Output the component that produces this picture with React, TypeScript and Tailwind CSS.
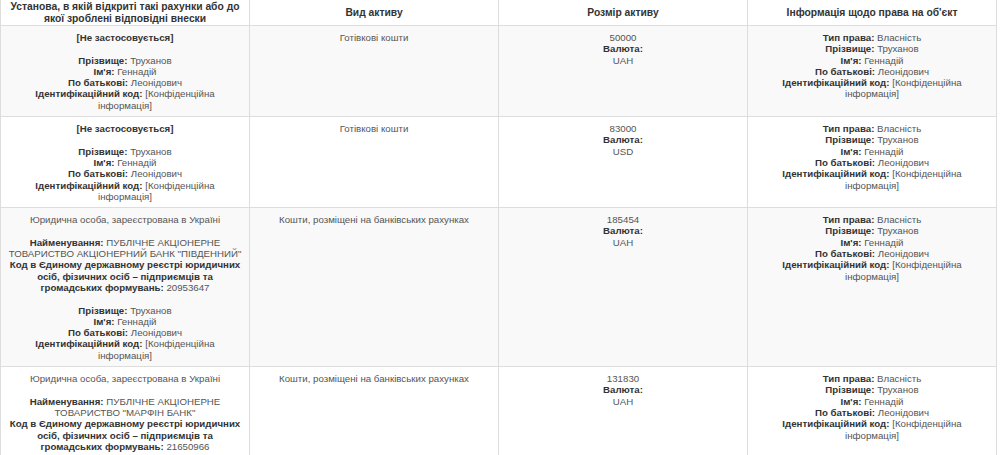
import React from "react";

const L = ({ children }: { children: React.ReactNode }) => (
  <b className="font-bold text-[#333]">{children}</b>
);

const Person = () => (
  <>
    <L>Прізвище:</L> Труханов
    <br />
    <L>Ім'я:</L> Геннадій
    <br />
    <L>По батькові:</L> Леонідович
    <br />
    <L>Ідентифікаційний код:</L> [Конфіденційна
    <br />
    інформація]
  </>
);

const Rights = () => (
  <>
    <L>Тип права:</L> Власність
    <br />
    <Person />
  </>
);

const Size = ({ amount, cur }: { amount: string; cur: string }) => (
  <>
    {amount}
    <br />
    <L>Валюта:</L>
    <br />
    {cur}
  </>
);

const Bank = ({ name2, code }: { name2: string; code: string }) => (
  <>
    Юридична особа, зареєстрована в Україні
    <br />
    <br />
    <L>Найменування:</L> ПУБЛІЧНЕ АКЦІОНЕРНЕ
    <br />
    {name2}
    <br />
    <L>Код в Єдиному державному реєстрі юридичних</L>
    <br />
    <L>осіб, фізичних осіб – підприємців та</L>
    <br />
    <L>громадських формувань:</L> {code}
    <br />
    <br />
    <Person />
  </>
);

const Cash = () => (
  <>
    <L>[Не застосовується]</L>
    <br />
    <br />
    <Person />
  </>
);

const td =
  "border border-[#ddd] px-[6px] pt-[6px] pb-[5px] align-top text-center whitespace-nowrap";
const th =
  "w-1/4 border-x border-b border-[#ddd] px-[6px] py-[1px] align-middle text-center font-bold text-[#333] text-[10.3px] leading-[11.5px] whitespace-nowrap";

export default function App() {
  const rows = [
    { a: <Cash />, b: "Готівкові кошти", c: <Size amount="50000" cur="UAH" />, d: <Rights /> },
    { a: <Cash />, b: "Готівкові кошти", c: <Size amount="83000" cur="USD" />, d: <Rights /> },
    {
      a: <Bank name2={'ТОВАРИСТВО АКЦІОНЕРНИЙ БАНК "ПІВДЕННИЙ"'} code="20953647" />,
      b: "Кошти, розміщені на банківських рахунках",
      c: <Size amount="185454" cur="UAH" />,
      d: <Rights />,
    },
    {
      a: <Bank name2={'ТОВАРИСТВО "МАРФІН БАНК"'} code="21650966" />,
      b: "Кошти, розміщені на банківських рахунках",
      c: <Size amount="131830" cur="UAH" />,
      d: <Rights />,
    },
  ];
  return (
    <div
      className="h-[455px] w-[1000px] overflow-hidden bg-white text-[9.7px] leading-[11.3px] text-[#555]"
      style={{ fontFamily: '"Liberation Sans", Arial, sans-serif' }}
    >
      <table className="w-[997px] table-fixed border-collapse">
        <thead>
          <tr className="h-[25px] bg-white">
            <th className={th}>
              Установа, в якій відкриті такі рахунки або до
              <br />
              якої зроблені відповідні внески
            </th>
            <th className={th}>Вид активу</th>
            <th className={th}>Розмір активу</th>
            <th className={th}>Інформація щодо права на об'єкт</th>
          </tr>
        </thead>
        <tbody>
          {rows.map((r, i) => (
            <tr key={i} className={i % 2 === 0 ? "bg-[#f9f9f9]" : "bg-white"}>
              <td className={td}>{r.a}</td>
              <td className={td}>{r.b}</td>
              <td className={td}>{r.c}</td>
              <td className={td}>{r.d}</td>
            </tr>
          ))}
        </tbody>
      </table>
    </div>
  );
}
